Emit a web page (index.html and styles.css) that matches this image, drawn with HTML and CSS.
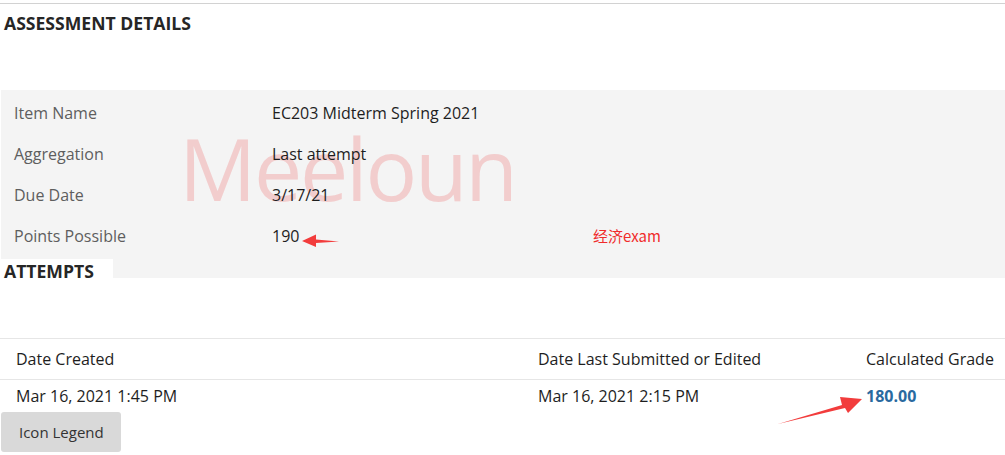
FILE: index.html
```html
<!DOCTYPE html>
<html lang="en">
<head>
<meta charset="utf-8">
<title>Assessment Details</title>
<link rel="stylesheet" href="styles.css">
</head>
<body>
<div class="page">
  <div class="topline"></div>
  <h2 class="section-title">ASSESSMENT DETAILS</h2>

  <div class="details">
    <div class="watermark">Meeloun</div>
    <div class="rows">
      <div class="row"><span class="label">Item Name</span><span class="value">EC203 Midterm Spring 2021</span></div>
      <div class="row"><span class="label">Aggregation</span><span class="value">Last attempt</span></div>
      <div class="row"><span class="label">Due Date</span><span class="value">3/17/21</span></div>
      <div class="row"><span class="label">Points Possible</span><span class="value">190</span></div>
    </div>
    <span class="note">经济exam</span>
    <h2 class="attempts-title">ATTEMPTS</h2>
  </div>

  <div class="attempts">
    <div class="trow thead">
      <div class="cell">Date Created</div>
      <div class="cell">Date Last Submitted or Edited</div>
      <div class="cell">Calculated Grade</div>
    </div>
    <div class="trow tbody">
      <div class="cell">Mar 16, 2021 1:45 PM</div>
      <div class="cell">Mar 16, 2021 2:15 PM</div>
      <div class="cell grade">180.00</div>
    </div>
  </div>

  <button class="legend-btn" type="button">Icon Legend</button>

  <svg class="annotations" width="1005" height="455" viewBox="0 0 1005 455" aria-hidden="true">
    <polygon points="339,241.5 316,239.5 316,234.5 302,241 316,247 316,243" fill="#f23c3c"/>
    <polygon points="778,424 842,405 840,397 862,399 848,413 845,408" fill="#f23c3c"/>
  </svg>
</div>
</body>
</html>
```
FILE: styles.css
```css
html, body {
  margin: 0;
  padding: 0;
  background: #ffffff;
}

.page {
  position: relative;
  width: 1005px;
  height: 455px;
  overflow: hidden;
  font-family: "Open Sans", "Noto Sans", sans-serif;
  color: #222;
}

.topline {
  height: 3px;
  border-bottom: 1px solid #d2d2d2;
}

.section-title {
  margin: 0;
  padding: 7px 4px 0;
  font-size: 17.6px;
  line-height: 24px;
  font-weight: 700;
  color: #262626;
}

.details {
  position: relative;
  margin: 55px 0 0 1px;
  padding-top: 3px;
  height: 185px;
  background: #f4f4f4;
}

.watermark {
  position: absolute;
  left: 178px;
  top: 35px;
  font-size: 86px;
  line-height: 86px;
  letter-spacing: -2.3px;
  font-weight: 400;
  color: #f2cdcd;
  white-space: nowrap;
}

.rows {
  position: relative;
}

.row {
  display: grid;
  grid-template-columns: 258px 1fr;
  padding-left: 13px;
  height: 41px;
  line-height: 41px;
  font-size: 16px;
}

.label {
  color: #5e5e5e;
}

.value {
  color: #1e1e1e;
}

.note {
  position: absolute;
  left: 592px;
  top: 135px;
  font-family: "Noto Sans CJK SC", sans-serif;
  font-size: 15px;
  line-height: 22px;
  color: #f02b2b;
}

.attempts-title {
  margin: 2px 0 0 -1px;
  width: 109px;
  height: 19px;
  padding-left: 4px;
  overflow: hidden;
  background: #ffffff;
  font-size: 17.6px;
  line-height: 24px;
  font-weight: 700;
  color: #262626;
}

.attempts {
  margin-top: 60px;
  border-top: 1px solid #e6e6e6;
}

.trow {
  display: grid;
  grid-template-columns: 522px 328px 1fr;
  font-size: 16px;
  color: #1e1e1e;
}

.thead {
  height: 40px;
  line-height: 40px;
  border-bottom: 1px solid #e6e6e6;
}

.tbody {
  height: 32px;
  line-height: 32px;
}

.cell {
  padding-left: 16px;
  white-space: nowrap;
}

.grade {
  font-weight: 700;
  color: #2a6a9f;
}

.legend-btn {
  display: block;
  margin: 0 0 0 1px;
  width: 120px;
  height: 40px;
  padding: 0 0 0 18px;
  text-align: left;
  border: none;
  border-radius: 3px;
  background: #d9d9d9;
  font-family: "Open Sans", sans-serif;
  font-size: 15px;
  color: #333333;
}

.annotations {
  position: absolute;
  left: 0;
  top: 0;
  pointer-events: none;
}
```
